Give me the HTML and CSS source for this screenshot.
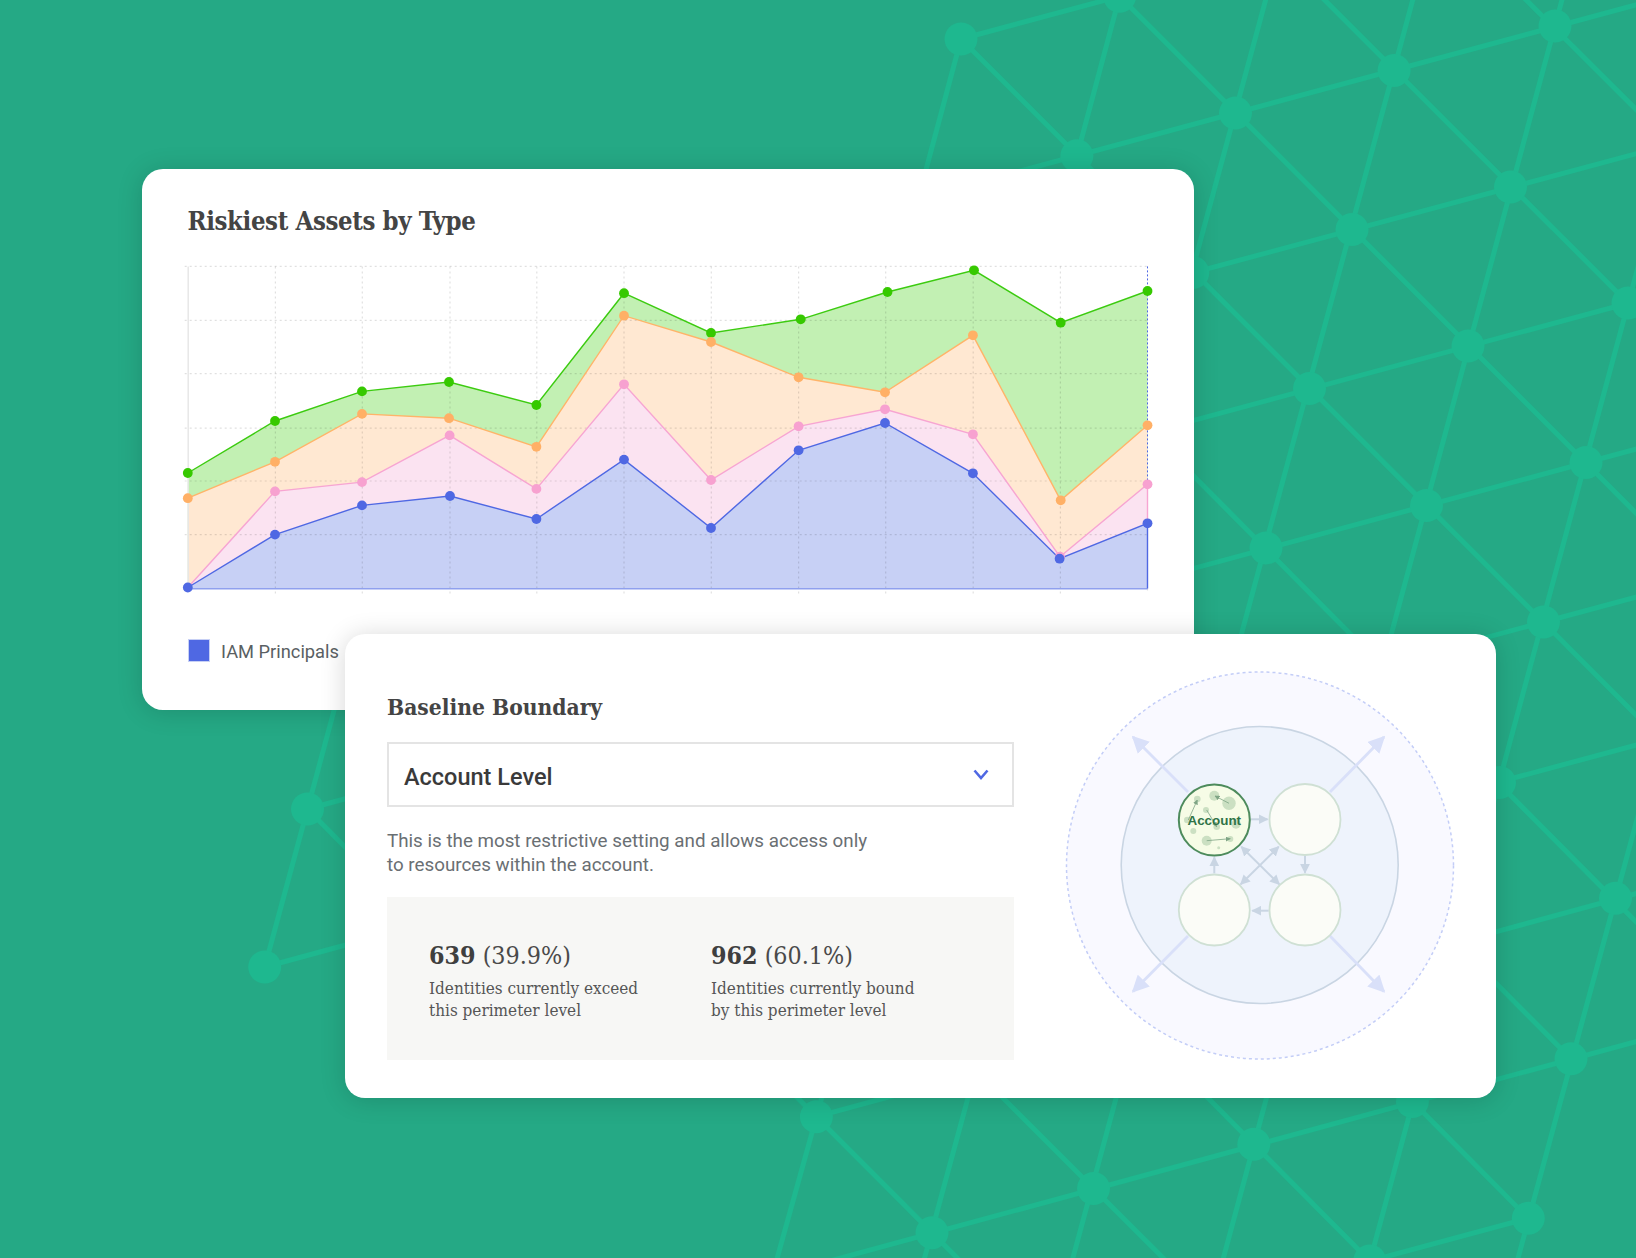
FILE: index.html
```html
<!DOCTYPE html>
<html lang="en">
<head>
<meta charset="utf-8">
<title>Riskiest Assets and Baseline Boundary</title>
<link rel="stylesheet" href="styles.css">
</head>
<body>
<main class="stage">
  <svg class="net" viewBox="0 0 1636 1258" aria-hidden="true">
    <g class="net-lines">
      <line x1="961" y1="39" x2="1278.2" y2="-46.4"/>
      <line x1="918.3" y1="198.5" x2="1713.3" y2="-16"/>
      <line x1="1034.2" y1="315.3" x2="1670.6" y2="144.5"/>
      <line x1="1150.1" y1="432.1" x2="1787.5" y2="260.3"/>
      <line x1="1107.4" y1="591.6" x2="1744.8" y2="419.8"/>
      <line x1="1064.7" y1="751.1" x2="1702.1" y2="579.3"/>
      <line x1="1022" y1="910.6" x2="1658.4" y2="739"/>
      <line x1="816.4" y1="1116.7" x2="1774.3" y2="856"/>
      <line x1="772" y1="1276.7" x2="1729.6" y2="1016.1"/>
      <line x1="1211.1" y1="1303.7" x2="1528.3" y2="1218.3"/>
      <line x1="961" y1="39" x2="875.6" y2="358"/>
      <line x1="1119.6" y1="-3.7" x2="949" y2="634.3"/>
      <line x1="860" y1="960" x2="772" y2="1276.7"/>
      <line x1="1278.2" y1="-46.4" x2="889" y2="1389.1"/>
      <line x1="1436.8" y1="-89.1" x2="1049" y2="1346.4"/>
      <line x1="1597.4" y1="-131.8" x2="1211.1" y2="1303.7"/>
      <line x1="1757" y1="-174.5" x2="1327" y2="1420.5"/>
      <line x1="1702.1" y1="579.3" x2="1485.6" y2="1377.8"/>
      <line x1="961" y1="39" x2="1660" y2="739"/>
      <line x1="1119.6" y1="-3.7" x2="1702.1" y2="579.3"/>
      <line x1="1278.2" y1="-46.4" x2="1744.8" y2="419.8"/>
      <line x1="1436.8" y1="-89.1" x2="1787.5" y2="260.3"/>
      <line x1="1597.4" y1="-131.8" x2="1829.2" y2="101.8"/>
      <line x1="918.3" y1="198.5" x2="1729.6" y2="1016.1"/>
      <line x1="991.5" y1="474.8" x2="1571" y2="1058.8"/>
      <line x1="1064.7" y1="751.1" x2="1528.3" y2="1218.3"/>
      <line x1="1022" y1="910.6" x2="1369.7" y2="1261"/>
      <line x1="860" y1="955" x2="1211.1" y2="1306"/>
      <line x1="700" y1="1000" x2="1048" y2="1349"/>
      <line x1="307.5" y1="809" x2="264.7" y2="967"/>
      <line x1="307.5" y1="809" x2="350.3" y2="650"/>
      <line x1="307.5" y1="809" x2="466" y2="766"/>
      <line x1="307.5" y1="809" x2="423" y2="926"/>
      <line x1="264.7" y1="967" x2="423" y2="924"/>
    </g>
    <g class="net-nodes">
      <circle cx="961" cy="39" r="16.5"/><circle cx="1119.6" cy="-3.7" r="16.5"/>
      <circle cx="1076.9" cy="155.8" r="16.5"/><circle cx="1235.5" cy="113.1" r="16.5"/>
      <circle cx="1394.1" cy="70.4" r="16.5"/><circle cx="1555" cy="26" r="16.5"/>
      <circle cx="1192.8" cy="272.6" r="16.5"/><circle cx="1352" cy="229.5" r="16.5"/>
      <circle cx="1510.5" cy="187" r="16.5"/><circle cx="1309.5" cy="388.5" r="16.5"/>
      <circle cx="1468" cy="346" r="16.5"/><circle cx="1628" cy="303" r="16.5"/>
      <circle cx="1266" cy="548" r="16.5"/><circle cx="1426.5" cy="505.5" r="16.5"/>
      <circle cx="1586" cy="462.5" r="16.5"/><circle cx="1543.5" cy="622" r="16.5"/>
      <circle cx="1499.5" cy="782.5" r="16.5"/><circle cx="1615.5" cy="898.3" r="16.5"/>
      <circle cx="1571" cy="1058.8" r="16.5"/><circle cx="1412.4" cy="1101.5" r="16.5"/>
      <circle cx="1253.8" cy="1144.2" r="16.5"/><circle cx="1093.5" cy="1188.5" r="16.5"/>
      <circle cx="932" cy="1232.7" r="16.5"/><circle cx="816.4" cy="1116.7" r="16.5"/>
      <circle cx="1369.7" cy="1261" r="16.5"/><circle cx="1528.3" cy="1218.3" r="16.5"/>
      <circle cx="307.5" cy="809" r="16.5"/><circle cx="264.7" cy="967" r="16.5"/>
    </g>
  </svg>

  <section class="card card-chart">
    <h2 class="title-lg">Riskiest Assets by Type</h2>
    <svg class="chart" viewBox="180 260 975 340" role="img" aria-label="Area chart of riskiest assets by type">
      <polygon class="fill-green" points="187.8,473 275,421 362,391.4 449,382 536.4,405 624,293.2 711,333 800.7,319.3 887.5,292 974,270.3 1060.7,322.7 1147.5,291 1147.5,588.5 187.8,588.5"/>
      <polygon class="fill-orange" points="187.8,498.2 275,461.8 362,413.9 449,418.2 536.4,446.8 624,315.7 711,342 798.6,377.3 885,392.3 972.9,335.3 1060.7,500.3 1147.5,425.3 1147.5,588.5 187.8,588.5"/>
      <polygon class="fill-pink" points="187.8,587.5 275,491.4 362,482.1 449.6,435.4 536.4,488.9 624,384.3 711,480 798.6,426.3 885,409.3 972.9,434.3 1060,556.7 1147.5,484.3 1147.5,588.5 187.8,588.5"/>
      <polygon class="fill-blue" points="187.8,587.5 275,534.6 362,505.4 450,496 536.4,519 624,459.6 711,528 798.6,450.3 885,423 972.9,473.3 1059.6,558.7 1147.5,523.3 1147.5,588.5 187.8,588.5"/>
      <g class="grid">
        <line x1="184.7" y1="266.4" x2="1147.5" y2="266.4"/>
        <line x1="184.7" y1="320.4" x2="1147.5" y2="320.4"/>
        <line x1="184.7" y1="373.6" x2="1147.5" y2="373.6"/>
        <line x1="184.7" y1="428.2" x2="1147.5" y2="428.2"/>
        <line x1="184.7" y1="481" x2="1147.5" y2="481"/>
        <line x1="184.7" y1="534.6" x2="1147.5" y2="534.6"/>
        <line x1="275.4" y1="266.4" x2="275.4" y2="593.6"/>
        <line x1="362.3" y1="266.4" x2="362.3" y2="593.6"/>
        <line x1="450" y1="266.4" x2="450" y2="593.6"/>
        <line x1="536.8" y1="266.4" x2="536.8" y2="593.6"/>
        <line x1="624" y1="266.4" x2="624" y2="593.6"/>
        <line x1="711.3" y1="266.4" x2="711.3" y2="593.6"/>
        <line x1="798.6" y1="266.4" x2="798.6" y2="593.6"/>
        <line x1="885.7" y1="266.4" x2="885.7" y2="593.6"/>
        <line x1="973.2" y1="266.4" x2="973.2" y2="593.6"/>
        <line x1="1060.4" y1="266.4" x2="1060.4" y2="593.6"/>
        <line x1="1147.5" y1="588.5" x2="1147.5" y2="593.6"/>
      </g>
      <line class="axis" x1="188.2" y1="266.4" x2="188.2" y2="588.5"/>
      <line class="edge-dash" x1="1147.5" y1="266.4" x2="1147.5" y2="484.3"/>
      <line class="baseline" x1="187.8" y1="588.8" x2="1147.5" y2="588.8"/>
      <polyline class="line-green" points="187.8,473 275,421 362,391.4 449,382 536.4,405 624,293.2 711,333 800.7,319.3 887.5,292 974,270.3 1060.7,322.7 1147.5,291"/>
      <polyline class="line-orange" points="187.8,498.2 275,461.8 362,413.9 449,418.2 536.4,446.8 624,315.7 711,342 798.6,377.3 885,392.3 972.9,335.3 1060.7,500.3 1147.5,425.3"/>
      <polyline class="line-pink" points="187.8,587.5 275,491.4 362,482.1 449.6,435.4 536.4,488.9 624,384.3 711,480 798.6,426.3 885,409.3 972.9,434.3 1060,556.7 1147.5,484.3 1147.5,523.3"/>
      <polyline class="line-blue" points="187.8,587.5 275,534.6 362,505.4 450,496 536.4,519 624,459.6 711,528 798.6,450.3 885,423 972.9,473.3 1059.6,558.7 1147.5,523.3 1147.5,588.5"/>
      <g class="dots-green">
        <circle cx="187.8" cy="473" r="4.9"/><circle cx="275" cy="421" r="4.9"/><circle cx="362" cy="391.4" r="4.9"/><circle cx="449" cy="382" r="4.9"/><circle cx="536.4" cy="405" r="4.9"/><circle cx="624" cy="293.2" r="4.9"/><circle cx="711" cy="333" r="4.9"/><circle cx="800.7" cy="319.3" r="4.9"/><circle cx="887.5" cy="292" r="4.9"/><circle cx="974" cy="270.3" r="4.9"/><circle cx="1060.7" cy="322.7" r="4.9"/><circle cx="1147.5" cy="291" r="4.9"/>
      </g>
      <g class="dots-orange">
        <circle cx="187.8" cy="498.2" r="4.9"/><circle cx="275" cy="461.8" r="4.9"/><circle cx="362" cy="413.9" r="4.9"/><circle cx="449" cy="418.2" r="4.9"/><circle cx="536.4" cy="446.8" r="4.9"/><circle cx="624" cy="315.7" r="4.9"/><circle cx="711" cy="342" r="4.9"/><circle cx="798.6" cy="377.3" r="4.9"/><circle cx="885" cy="392.3" r="4.9"/><circle cx="972.9" cy="335.3" r="4.9"/><circle cx="1060.7" cy="500.3" r="4.9"/><circle cx="1147.5" cy="425.3" r="4.9"/>
      </g>
      <g class="dots-pink">
        <circle cx="275" cy="491.4" r="4.9"/><circle cx="362" cy="482.1" r="4.9"/><circle cx="449.6" cy="435.4" r="4.9"/><circle cx="536.4" cy="488.9" r="4.9"/><circle cx="624" cy="384.3" r="4.9"/><circle cx="711" cy="480" r="4.9"/><circle cx="798.6" cy="426.3" r="4.9"/><circle cx="885" cy="409.3" r="4.9"/><circle cx="972.9" cy="434.3" r="4.9"/><circle cx="1060" cy="556.7" r="4.9"/><circle cx="1147.5" cy="484.3" r="4.9"/>
      </g>
      <g class="dots-blue">
        <circle cx="187.8" cy="587.5" r="4.9"/><circle cx="275" cy="534.6" r="4.9"/><circle cx="362" cy="505.4" r="4.9"/><circle cx="450" cy="496" r="4.9"/><circle cx="536.4" cy="519" r="4.9"/><circle cx="624" cy="459.6" r="4.9"/><circle cx="711" cy="528" r="4.9"/><circle cx="798.6" cy="450.3" r="4.9"/><circle cx="885" cy="423" r="4.9"/><circle cx="972.9" cy="473.3" r="4.9"/><circle cx="1059.6" cy="558.7" r="4.9"/><circle cx="1147.5" cy="523.3" r="4.9"/>
      </g>
    </svg>
    <div class="legend">
      <span class="swatch"></span>
      <span class="legend-label">IAM Principals</span>
    </div>
  </section>

  <section class="card card-boundary">
    <div class="boundary-main">
      <h2 class="title-md">Baseline Boundary</h2>
      <div class="select">
        <span class="select-value">Account Level</span>
        <svg class="chevron" viewBox="0 0 16 11" aria-hidden="true"><path d="M1.5 1.5 8 9l6.5-7.5"/></svg>
      </div>
      <p class="desc">This is the most restrictive setting and allows access only<br>to resources within the account.</p>
      <div class="stats">
        <div class="stat">
          <div class="stat-num"><b>639</b> (39.9%)</div>
          <div class="stat-text">Identities currently exceed<br>this perimeter level</div>
        </div>
        <div class="stat">
          <div class="stat-num"><b>962</b> (60.1%)</div>
          <div class="stat-text">Identities currently bound<br>by this perimeter level</div>
        </div>
      </div>
    </div>
    <svg class="diagram" viewBox="1060 665 400 400" aria-hidden="true">
      <defs>
        <marker id="big" viewBox="0 0 10 10" refX="9" refY="5" markerUnits="userSpaceOnUse" markerWidth="17" markerHeight="17" orient="auto"><path class="m-big" d="M0 0 10 5 0 10z"/></marker>
        <marker id="small" viewBox="0 0 10 10" refX="9" refY="5" markerUnits="userSpaceOnUse" markerWidth="10" markerHeight="10" orient="auto-start-reverse"><path class="m-small" d="M0 0 10 5 0 10z"/></marker>
        <marker id="tiny" viewBox="0 0 10 10" refX="9" refY="5" markerUnits="userSpaceOnUse" markerWidth="5" markerHeight="5" orient="auto"><path class="m-tiny" d="M0 0 10 5 0 10z"/></marker>
      </defs>
      <circle class="ring-outer" cx="1260" cy="865.5" r="193.5"/>
      <circle class="ring-inner" cx="1259.7" cy="865" r="138.5"/>
      <g class="arrows-big">
        <line x1="1188" y1="792" x2="1133" y2="737" marker-end="url(#big)"/>
        <line x1="1330" y1="792" x2="1384" y2="737" marker-end="url(#big)"/>
        <line x1="1188" y1="936" x2="1133" y2="991.5" marker-end="url(#big)"/>
        <line x1="1330" y1="936" x2="1384" y2="991.5" marker-end="url(#big)"/>
      </g>
      <g class="arrows-small">
        <line x1="1250.7" y1="819.3" x2="1267.5" y2="819.3" marker-end="url(#small)"/>
        <line x1="1305" y1="855.7" x2="1305" y2="872.7" marker-end="url(#small)"/>
        <line x1="1268.7" y1="910.7" x2="1252.3" y2="910.7" marker-end="url(#small)"/>
        <line x1="1214.3" y1="873.3" x2="1214.3" y2="857.3" marker-end="url(#small)"/>
        <line x1="1241.3" y1="846.7" x2="1279.3" y2="884.3" marker-start="url(#small)" marker-end="url(#small)"/>
        <line x1="1278.7" y1="846.7" x2="1240.7" y2="884.3" marker-start="url(#small)" marker-end="url(#small)"/>
      </g>
      <circle class="node" cx="1305" cy="819.5" r="35.5"/>
      <circle class="node" cx="1214.3" cy="910" r="35.5"/>
      <circle class="node" cx="1305" cy="910" r="35.5"/>
      <circle class="node-active" cx="1214.3" cy="820" r="35.5"/>
      <g class="blobs">
        <circle cx="1197.3" cy="799" r="3.3"/><circle cx="1214.3" cy="795.7" r="5"/><circle cx="1229" cy="803.3" r="6.7"/><circle cx="1206" cy="810" r="3"/><circle cx="1187.3" cy="820" r="3.3"/><circle cx="1216.7" cy="826.7" r="3.3"/><circle cx="1236" cy="824" r="4.7"/><circle cx="1193.3" cy="831" r="3"/><circle cx="1206.7" cy="840.7" r="5"/><circle cx="1230.3" cy="839" r="3"/><circle cx="1218.7" cy="847.7" r="1.5"/>
      </g>
      <g class="arrows-tiny">
        <line x1="1229" y1="803.3" x2="1215" y2="796" marker-end="url(#tiny)"/>
        <line x1="1188.3" y1="820" x2="1197.3" y2="800" marker-end="url(#tiny)"/>
        <line x1="1206.7" y1="810" x2="1216.7" y2="826.7" marker-end="url(#tiny)"/>
        <line x1="1206.7" y1="840.7" x2="1230.3" y2="838.7" marker-end="url(#tiny)"/>
      </g>
      <text class="node-label" x="1214.3" y="824.7" text-anchor="middle">Account</text>
    </svg>
  </section>
</main>
</body>
</html>
```
FILE: styles.css
```css
* { box-sizing: border-box; }
html, body { margin: 0; padding: 0; }
body { background: #25a985; overflow: hidden; }

.stage {
  position: relative;
  width: 1636px;
  height: 1258px;
  overflow: hidden;
  padding-top: 169px;
}
.net { position: absolute; left: 0; top: 0; width: 1636px; height: 1258px; }
.net-lines line { stroke: #1eb88f; stroke-width: 5; }
.net-nodes circle { fill: #1eb88f; }

.card {
  position: relative;
  background: #fff;
  border-radius: 21px;
  box-shadow: 0 2px 26px rgba(0, 0, 0, .16);
}
.card-chart {
  margin-left: 142px;
  width: 1052px;
  height: 540.5px;
  padding: 34px 0 0 45.5px;
}
.title-lg {
  margin: 0;
  font: 700 25.5px/36px "DejaVu Serif Condensed", "DejaVu Serif", serif;
  letter-spacing: -.38px;
  color: #444;
}
.chart {
  display: block;
  width: 975px;
  height: 340px;
  margin: 21.2px 0 0 -7.5px;
}
.fill-green { fill: #c2f0b3; }
.fill-orange { fill: #ffe8d2; }
.fill-pink { fill: #fbe3f1; }
.fill-blue { fill: #c7d0f5; }
.grid line { stroke: rgba(0, 0, 0, .12); stroke-width: 1.2; stroke-dasharray: 2 3; }
.axis { stroke: #e6e6e6; stroke-width: 1.4; }
.edge-dash { stroke: #4f68e3; stroke-width: 1; stroke-dasharray: 2 2; }
.baseline { stroke: #8fa0ee; stroke-width: 1.6; }
polyline { fill: none; stroke-width: 1.4; }
.line-green { stroke: #3ccb10; }
.line-orange { stroke: #ffb469; }
.line-pink { stroke: #f7a5d2; }
.line-blue { stroke: #4f68e3; }
.dots-green circle { fill: #36c900; }
.dots-orange circle { fill: #ffb066; }
.dots-pink circle { fill: #f7a1d0; }
.dots-blue circle { fill: #4f68e3; }

.legend {
  display: flex;
  align-items: center;
  gap: 11.5px;
  margin-top: 37.8px;
}
.swatch {
  display: block;
  width: 22px;
  height: 23px;
  background: #4f68e3;
  border: 1px solid #c7d0f5;
}
.legend-label {
  padding-top: 2px;
  font: 400 18.3px/24px Roboto, "Liberation Sans", sans-serif;
  color: #5a5f63;
}

.card-boundary {
  display: flex;
  margin: -76px 0 0 345px;
  width: 1151px;
  height: 464px;
  padding: 0 0 0 42px;
  border-radius: 20px;
}
.boundary-main { width: 627px; padding-top: 57px; }
.title-md {
  margin: 0;
  font: 700 22.6px/32px "DejaVu Serif Condensed", "DejaVu Serif", serif;
  color: #444;
}
.select {
  display: flex;
  align-items: center;
  justify-content: space-between;
  height: 65px;
  margin-top: 19px;
  padding: 5px 23px 0 15px;
  border: 2px solid #e4e4e4;
}
.select-value {
  font: 500 23.5px/32px Roboto, "Liberation Sans", sans-serif;
  color: #3a3a3a;
}
.chevron { width: 16px; height: 11px; margin-bottom: 5px; fill: none; stroke: #4f68e3; stroke-width: 2.6; }
.desc {
  margin: 22.5px 0 0;
  font: 400 18.8px/24px Roboto, "Liberation Sans", sans-serif;
  color: #6a6f73;
}
.stats {
  display: grid;
  grid-template-columns: 282px 1fr;
  height: 163px;
  margin-top: 20px;
  padding: 42px 0 0 42px;
  background: #f7f7f5;
}
.stat-num {
  font: 400 24.8px/34px "DejaVu Serif Condensed", "DejaVu Serif", serif;
  color: #4a4a4a;
}
.stat-num b { font-weight: 700; color: #3f3f3f; }
.stat-text {
  margin-top: 4px;
  font: 400 17px/22px "DejaVu Serif Condensed", "DejaVu Serif", serif;
  color: #555;
}

.diagram {
  display: block;
  width: 400px;
  height: 400px;
  margin: 31.5px 0 0 46px;
}
.ring-outer { fill: #f9f9ff; stroke: #c3cdf7; stroke-width: 1.5; stroke-dasharray: 3 3; }
.ring-inner { fill: #eef3fc; stroke: #c9d5e3; stroke-width: 1.6; }
.arrows-big line { stroke: #d9e0f9; stroke-width: 2.8; }
.m-big { fill: #d9e0f9; }
.arrows-small line { stroke: #c9d5e3; stroke-width: 2; }
.m-small { fill: #c9d5e3; }
.m-tiny { fill: #7fa585; }
.arrows-tiny line { stroke: #7fa585; stroke-width: .8; }
.node { fill: #fbfcf7; stroke: #cfe0d4; stroke-width: 1.8; }
.node-active { fill: #f6fce6; stroke: #4d8b5c; stroke-width: 2; }
.blobs circle { fill: #cbe0c2; }
.node-label {
  font: 700 13.4px "Liberation Sans", Roboto, sans-serif;
  fill: #2f7347;
}
```
